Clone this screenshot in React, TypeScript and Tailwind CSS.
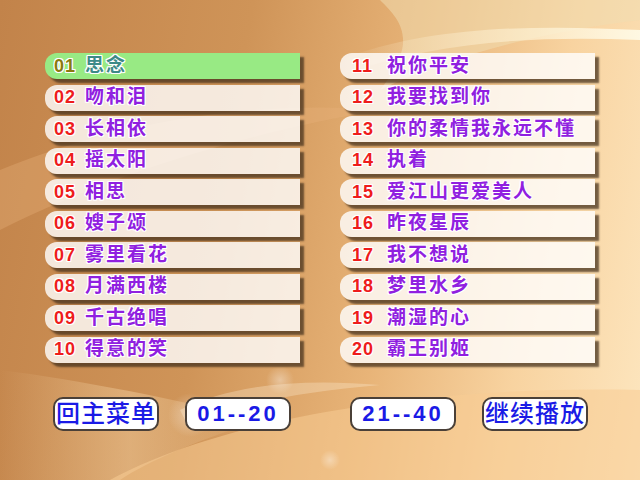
import React from "react";

const left = ["思念", "吻和泪", "长相依", "摇太阳", "相思", "嫂子颂", "雾里看花", "月满西楼", "千古绝唱", "得意的笑"];
const right = ["祝你平安", "我要找到你", "你的柔情我永远不懂", "执着", "爱江山更爱美人", "昨夜星辰", "我不想说", "梦里水乡", "潮湿的心", "霸王别姬"];

const outline =
  "[text-shadow:1px_0_0_#fff,-1px_0_0_#fff,0_1px_0_#fff,0_-1px_0_#fff,1px_1px_0_#fff,-1px_-1px_0_#fff,1px_-1px_0_#fff,-1px_1px_0_#fff]";

function Row({ num, name, selected, wide }: { num: string; name: string; selected?: boolean; wide?: boolean }) {
  return (
    <div
      className={
        "h-[26px] w-[255px] rounded-l-[12px] flex items-center shadow-[4px_4px_2px_rgba(70,50,30,0.75)] " +
        (selected ? "bg-[#98ea84]" : "bg-white/80")
      }
    >
      <span
        className={
          (wide ? "w-[47px] pl-[12px]" : "w-[40px] pl-[9px]") +
          " text-[18px] font-bold tracking-[1px] " +
          (selected ? "text-[#8a7a10] " : "text-[#ee1c1c] ") +
          outline
        }
      >
        {num}
      </span>
      <span
        className={
          "text-[19px] font-semibold tracking-[2px] whitespace-nowrap " +
          (selected ? "text-[#3d8a88] " : "text-[#9020e0] ") +
          outline
        }
      >
        {name}
      </span>
    </div>
  );
}

function Btn({ label, digits }: { label: string; digits?: boolean }) {
  return (
    <div className="h-[34px] w-[106px] rounded-[10px] border-2 border-[#4a4038] bg-white flex items-center justify-center">
      <span
        className={
          "text-[#1a1ae6] leading-none " +
          (digits ? "text-[22px] tracking-[3px] font-semibold" : "text-[24px] tracking-[1px] font-medium")
        }
      >
        {label}
      </span>
    </div>
  );
}

export default function App() {
  return (
    <div
      className="relative w-[640px] h-[480px] overflow-hidden bg-[linear-gradient(100deg,#c2834a_0%,#cf9458_35%,#e8b478_60%,#f8d3a0_80%,#fde6bf_100%)]"
      style={{ fontFamily: '"Liberation Sans", "Noto Sans CJK SC", sans-serif' }}
    >
      <svg className="absolute inset-0" width="640" height="480" viewBox="0 0 640 480">
        <defs>
          <linearGradient id="g1" x1="0" y1="0" x2="1" y2="0">
            <stop offset="0" stopColor="#fff4d8" stopOpacity="0" />
            <stop offset="0.6" stopColor="#fff4d8" stopOpacity="0.6" />
            <stop offset="1" stopColor="#fffbe8" stopOpacity="0.9" />
          </linearGradient>
          <linearGradient id="g3" x1="0" y1="0" x2="1" y2="0">
            <stop offset="0" stopColor="#f0cc9c" stopOpacity="0" />
            <stop offset="0.5" stopColor="#f0cc9c" stopOpacity="0.5" />
            <stop offset="1" stopColor="#f0cc9c" stopOpacity="0" />
          </linearGradient>
          <radialGradient id="r1" cx="0.5" cy="0.5" r="0.5">
            <stop offset="0" stopColor="#fff" stopOpacity="0.35" />
            <stop offset="1" stopColor="#fff" stopOpacity="0" />
          </radialGradient>
        </defs>
        <path d="M380 0 L640 0 L640 20 C560 30 460 50 380 90 C420 40 400 20 380 0 Z" fill="#f0dcb0" opacity="0.55" />
        <path d="M340 60 C430 25 540 25 640 30 L640 40 C540 36 440 40 340 75 Z" fill="url(#g1)" />
        <path d="M0 170 C120 120 260 100 380 110 C260 130 120 170 0 230 Z" fill="#e9b27a" opacity="0.35" />
        <path d="M0 370 C80 380 180 400 260 420 C200 440 150 460 120 480 L0 480 Z" fill="url(#g3)" />
        <path d="M110 480 C220 420 420 385 640 390 L640 480 Z" fill="#f8cc94" opacity="0.55" />
        <path d="M180 410 C230 385 300 378 380 385 C300 392 240 402 190 430 Z" fill="#fff2dc" opacity="0.3" />
        <circle cx="190" cy="415" r="22" fill="url(#r1)" />
        <circle cx="280" cy="380" r="14" fill="url(#r1)" />
        <circle cx="330" cy="460" r="10" fill="url(#r1)" />
      </svg>
      <div className="relative pt-[53px] pl-[45px]">
        <div className="flex gap-[40px]">
          <div className="flex flex-col gap-[5.5px]">
            {left.map((n, i) => (
              <Row key={i} num={String(i + 1).padStart(2, "0")} name={n} selected={i === 0} />
            ))}
          </div>
          <div className="flex flex-col gap-[5.5px]">
            {right.map((n, i) => (
              <Row key={i} num={String(i + 11)} name={n} wide />
            ))}
          </div>
        </div>
        <div className="flex mt-[34px] ml-[8px]">
          <Btn label="回主菜单" />
          <div className="ml-[26px]">
            <Btn label="01--20" digits />
          </div>
          <div className="ml-[59px]">
            <Btn label="21--40" digits />
          </div>
          <div className="ml-[26px]">
            <Btn label="继续播放" />
          </div>
        </div>
      </div>
    </div>
  );
}
